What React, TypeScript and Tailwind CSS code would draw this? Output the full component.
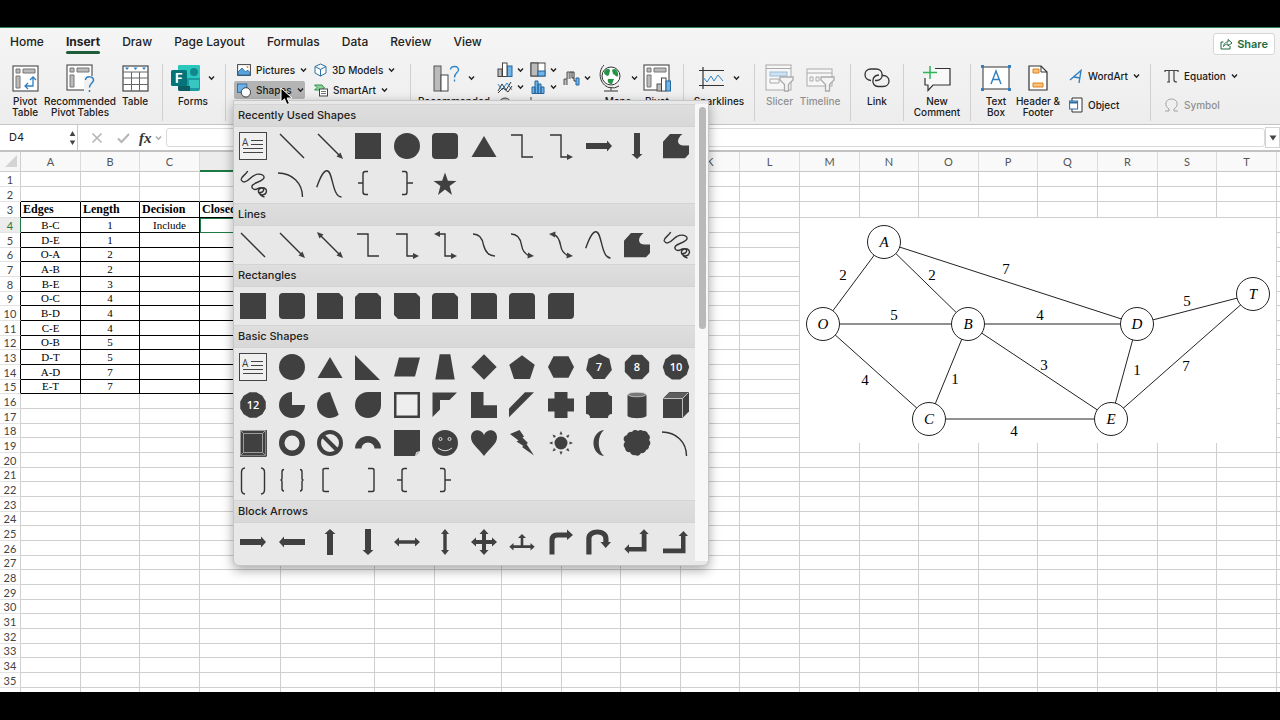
import React from "react";
import { clsx } from "clsx";

const INK = "#404040";

/* ---------- shape gallery ---------- */

const line = { fill: "none", stroke: "#333", strokeWidth: 1.4 };
const poly = (points: string) => <polygon points={points} />;
const numbered = (sides: number) => {
  const pts: string[] = [];
  const offset = sides === 7 ? 0 : Math.PI / sides;
  for (let i = 0; i < sides; i++) {
    const a = -Math.PI / 2 + offset + (i * 2 * Math.PI) / sides;
    pts.push(`${14 + 13.2 * Math.cos(a)},${14 + 13.2 * Math.sin(a)}`);
  }
  return (
    <>
      <polygon points={pts.join(" ")} />
      <text
        x="14"
        y="18"
        textAnchor="middle"
        fill="#fff"
        className="font-['Open_Sans',sans-serif] text-[11px] font-semibold"
      >
        {sides}
      </text>
    </>
  );
};

const rightArrow = "M1 11H22V8.500L27 14L22 19.500V17H1Z";
const freeform = "M1 9.700L8 2H20.500C15 6 14 13 21 13.500H27V22L23 26.300H1Z";
const scribble =
  "M8.700 1C7 5 1 7 2.300 10C4 13 7 12.500 11 8.500C15 4.500 20 3 23.500 5C28 8 22 11 18 12.500C14 14 12 16 13.300 18C15 21 18 19 20 18C24 17 27.500 18 27.500 21C27 26 22 25.500 20 23C18 20 22 17 24 18.500C26 20 23 23 21 22.500C20 24 22 26 25.500 27";
const sCurve = "M.7 17.300C4 8 7 .8 11 .8C17 .8 16 27 25.500 27";
const arc = "M0 3C14 3 24.500 13 24.500 27";
const leftBrace = "M14 1.500H11.500Q9 1.500 9 4V22Q9 24.500 11.500 24.500H14M9 13H4";
const rightBrace = "M9 1.500H12Q14 1.500 14 4V22Q14 24.500 12 24.500H9M14 13H20";

const shapes: Record<string, React.ReactNode> = {
  "Text Box": (
    <>
      <rect x=".5" y=".5" width="27" height="27" fill="#f0f0f0" stroke="#444" />
      <path d="M12 8.500H24M12 12.500H24M4 16.500H24M4 20.500H24" stroke="#444" />
      <text x="3" y="14" className="font-['Open_Sans',sans-serif] text-[10px]">
        A
      </text>
    </>
  ),
  Line: <path d="M2 2L26 26" {...line} />,
  Arrow: (
    <>
      <path d="M2 2L24 24" {...line} />
      {poly("27,27 20.5,24.5 24.5,20.5")}
    </>
  ),
  "Double Arrow": (
    <>
      <path d="M4 4L24 24" {...line} />
      {poly("27,27 20.5,24.5 24.5,20.5")}
      {poly("1,1 7.5,3.5 3.5,7.5")}
    </>
  ),
  Rectangle: <rect x="1" y="1" width="26" height="26" />,
  Oval: <circle cx="14" cy="14" r="13" />,
  "Rounded Rectangle": <rect x="1" y="1" width="26" height="26" rx="4" />,
  Triangle: poly("14,4 26.5,25 1.5,25"),
  Elbow: <path d="M3 3H14V25H25" {...line} />,
  "Elbow Arrow": (
    <>
      <path d="M3 3H14V25H21" {...line} />
      {poly("26,25 20,22 20,28")}
    </>
  ),
  "Elbow Double Arrow": (
    <>
      <path d="M8 3H14V25H21" {...line} />
      {poly("26,25 20,22 20,28")}
      {poly("3,3 9,0 9,6")}
    </>
  ),
  "Curved Connector": <path d="M3 3C10 3 12.500 8 13.500 14C15 20 18 25 25 25" {...line} />,
  "Curved Arrow": (
    <>
      <path d="M3 3C10 3 12.500 8 13.500 14C14.500 20 17 23 21 24.500" {...line} />
      {poly("26,25 20,21.5 19.500,27.5")}
    </>
  ),
  "Curved Double Arrow": (
    <>
      <path d="M7 3.500C11 5 12.500 9 13.500 14C14.500 20 17 23 21 24.500" {...line} />
      {poly("26,25 20,21.5 19.500,27.5")}
      {poly("2,3 8.500,.5 8,6.5")}
    </>
  ),
  "Right Arrow": <path d={rightArrow} />,
  "Left Arrow": <path d={rightArrow} transform="rotate(180 14 14)" />,
  "Down Arrow": <path d={rightArrow} transform="rotate(90 14 14)" />,
  "Up Arrow": <path d={rightArrow} transform="rotate(-90 14 14)" />,
  Freeform: <path d={freeform} />,
  Scribble: <path d={scribble} {...line} />,
  Arc: <path d={arc} {...line} />,
  Curve: <path d={sCurve} {...line} />,
  "Left Brace": <path d={leftBrace} {...line} />,
  "Right Brace": <path d={rightBrace} {...line} />,
  Star: poly("14,2.500 16.900,10.700 25.500,10.900 18.600,16.100 21,25 14,19.600 7,25 9.400,16.100 2.500,10.900 11.100,10.700"),
  "Snip Single": poly("1,1 23,1 27,5 27,27 1,27"),
  "Snip Same Side": poly("5,1 23,1 27,5 27,27 1,27 1,5"),
  "Snip Diagonal": poly("1,1 23,1 27,5 27,27 5,27 1,23"),
  "Snip and Round": <path d="M5 1H23L27 5V27H1V5Q1 1 5 1Z" />,
  "Round Single": <path d="M1 1H23Q27 1 27 5V27H1Z" />,
  "Round Same Side": <path d="M5 1H23Q27 1 27 5V27H1V5Q1 1 5 1Z" />,
  "Round Diagonal": <path d="M5 1H27V23Q27 27 23 27H1V5Q1 1 5 1Z" />,
  "Right Triangle": poly("1,2 26,27 1,27"),
  Parallelogram: poly("6,4.500 27,4.500 22,23.500 1,23.500"),
  Trapezoid: poly("8.700,1.300 19.300,1.300 23.700,26.500 4.300,26.500"),
  Diamond: poly("14,1.300 26.700,14 14,26.700 1.300,14"),
  Pentagon: poly("14,2.300 26.700,11.700 22,26 6,26 1.300,11.700"),
  Hexagon: poly("6.500,3.300 21.500,3.300 27,14 21.500,24.700 6.500,24.700 1,14"),
  Heptagon: numbered(7),
  Octagon: numbered(8),
  Decagon: numbered(10),
  Dodecagon: numbered(12),
  Pie: <path d="M14 1A13 13 0 1 0 27 14H14Z" />,
  Chord: <path d="M14 1L22.700 23.700A13 13 0 1 1 14 1Z" />,
  Teardrop: <path d="M14 1H27V14A13 13 0 1 1 14 1Z" />,
  Frame: <rect x="2.250" y="2.250" width="23.500" height="23.500" fill="#eee" stroke={INK} strokeWidth="2.500" />,
  "Half Frame": poly("1.500,1.500 26,1.500 18.500,9 9,9 9,18.500 1.500,26"),
  "L-Shape": poly("1,1 13.500,1 13.500,14.300 27,14.300 27,27 1,27"),
  "Diagonal Stripe": poly("1,17.500 17,1.300 26,1.300 1,26.300"),
  Cross: <path d="M7.500 1H20.500V7.500H27V20.500H20.500V27H7.500V20.500H1V7.500H7.500Z" />,
  Plaque: <path d="M5 1H23Q23 5 27 5V23Q23 23 23 27H5Q5 23 1 23V5Q5 5 5 1Z" />,
  Can: (
    <>
      <path d="M4.500 4V24.500C4.500 28 23.500 28 23.500 24.500V4Z" />
      <ellipse cx="14" cy="3.500" rx="9" ry="2.300" fill="#777" stroke="#ddd" strokeWidth=".7" />
    </>
  ),
  Cube: (
    <>
      <path d="M1 7.500L7.500 1H27V20.500L20.500 27H1Z" />
      <path d="M1.500 7.500L7.500 1.500H26.500L20.500 7.500Z" fill="#5e5e5e" />
      <path d="M1.500 7.500H20.500V26.500M20.500 7.500L26.500 1.500" fill="none" stroke="#ddd" strokeWidth=".8" />
    </>
  ),
  Bevel: (
    <>
      <rect x="1" y="1" width="26" height="26" />
      <path d="M1.500 1.500H26.500V26.500H1.500ZM4.500 4.500H23.500V23.500H4.500ZM1.500 1.500L4.500 4.500M26.500 1.500L23.500 4.500M26.500 26.500L23.500 23.500M1.500 26.500L4.500 23.500" fill="none" stroke="#c4c4c4" strokeWidth=".7" />
      <path d="M1 27.300H27.300V1" fill="none" stroke="#222" />
    </>
  ),
  Donut: <circle cx="14" cy="14" r="10.250" fill="none" stroke={INK} strokeWidth="5.500" />,
  "No Symbol": (
    <g fill="none" stroke={INK} strokeWidth="4">
      <circle cx="14" cy="14" r="11" />
      <path d="M6.500 6.500L21.500 21.500" />
    </g>
  ),
  "Block Arc": <path d="M1 19.500A13 12.500 0 0 1 27 19.500H20.500A6.500 6 0 0 0 7.500 19.500Z" />,
  "Folded Corner": (
    <>
      <path d="M1 1H27V22.500L22.500 27H1Z" />
      <path d="M22.500 27L23.500 23.500L27 22.500" fill="#bbb" stroke="#eee" strokeWidth=".8" />
    </>
  ),
  "Smiley Face": (
    <>
      <circle cx="14" cy="14" r="13" />
      <g fill="none" stroke="#ddd">
        <circle cx="9.500" cy="10" r="1.500" />
        <circle cx="18.500" cy="10" r="1.500" />
        <path d="M7 19Q14 24.500 21 19" />
      </g>
    </>
  ),
  Heart: <path d="M14 6C17-1 27 0 27 8.500C27 15 19 20 14 27C9 20 1 15 1 8.500C1 0 11-1 14 6Z" />,
  "Lightning Bolt": poly("2,5 11.500,1 16,7.500 14.500,8.500 20,14 18.500,15 26,26.500 14,18 15.500,17 8.500,12.500 10.500,11.500"),
  Sun: (
    <>
      <circle cx="14" cy="14" r="6.500" />
      {[0, 45, 90, 135, 180, 225, 270, 315].map((a) => (
        <polygon key={a} points="14,2 12.500,5.500 15.500,5.500" transform={`rotate(${a} 14 14)`} />
      ))}
    </>
  ),
  Moon: <path d="M19 1C5 3 5 25 19 27C12 21 12 7 19 1Z" />,
  Cloud: (
    <path d="M4 6A4 4 0 0 1 9 3A4 4 0 0 1 15 2A4 4 0 0 1 20 2A4 4 0 0 1 25 5A4 4 0 0 1 26 11A4 4 0 0 1 26 17A4 4 0 0 1 23 21A4 4 0 0 1 18 24A4 4 0 0 1 12 26A4 4 0 0 1 7 23A4 4 0 0 1 2 19A4 4 0 0 1 2 13A4 4 0 0 1 4 6Z" />
  ),
  "Double Bracket": <path d="M6 1Q2.500 1.500 2.500 5V23Q2.500 26.500 6 27M22 1Q25.500 1.500 25.500 5V23Q25.500 26.500 22 27" {...line} />,
  "Double Brace": (
    <path d="M6 2.500Q4 2.500 4 5V11Q4 13 2.500 13Q4 13 4 15V21.500Q4 24 6 24M22 2.500Q24 2.500 24 5V11Q24 13 25.500 13Q24 13 24 15V21.500Q24 24 22 24" {...line} />
  ),
  "Left Bracket": <path d="M13 1.500H9Q7 1.500 7 3V23Q7 24.500 9 24.500H13" {...line} />,
  "Right Bracket": <path d="M14 1.500H18Q20 1.500 20 3V23Q20 24.500 18 24.500H14" {...line} />,
  "Left-Right Arrow": <path d="M1 14L6 9.500V12.300H22V9.500L27 14L22 18.500V15.700H6V18.500Z" />,
  "Up-Down Arrow": <path d="M1 14L6 10V12.300H22V10L27 14L22 18V15.700H6V18Z" transform="rotate(90 14 14)" />,
  "Quad Arrow": (
    <path d="M14 1L18.500 6H16V12H22V9.500L27 14L22 18.500V16H16V22H18.500L14 27L9.500 22H12V16H6V18.500L1 14L6 9.500V12H12V6H9.500Z" />
  ),
  "Left-Right-Up Arrow": (
    <path d="M14 6L18 10H15.300V17.300H22.500V15L26.700 18.700L22.500 22.500V20H5.500V22.500L1.300 18.700L5.500 15V17.300H12.700V10H10Z" />
  ),
  "Bent Arrow": <path d="M2.500 26.500V12Q2.500 4.500 10 4.500H20V1.500L26 7L20 12V9.500H10.500Q7.500 9.500 7.500 12.500V26.500Z" />,
  "U-Turn Arrow": (
    <path d="M1.300 26.500V10.500C1.300-1.500 23.500-1.500 23.500 10.500V14H26L20.700 20L15.500 14H18.300V10.500C18.300 5 6.500 5 6.500 10.500V26.500Z" />
  ),
  "Left-Up Arrow": poly("1.300,21 6,16.300 6,19 18.700,19 18.700,6 16.300,6 21,1.300 25.700,6 23.500,6 23.500,23.500 6,23.500 6,25.700"),
  "Bent-Up Arrow": poly("1,20.500 19,20.500 19,8 16.500,8 21.500,3 26,8 23.500,8 23.500,25.300 1,25.300"),
};

const sections = [
  {
    title: "Recently Used Shapes",
    items: [
      "Text Box", "Line", "Arrow", "Rectangle", "Oval", "Rounded Rectangle", "Triangle", "Elbow",
      "Elbow Arrow", "Right Arrow", "Down Arrow", "Freeform", "Scribble", "Arc", "Curve",
      "Left Brace", "Right Brace", "Star",
    ],
  },
  {
    title: "Lines",
    items: [
      "Line", "Arrow", "Double Arrow", "Elbow", "Elbow Arrow", "Elbow Double Arrow",
      "Curved Connector", "Curved Arrow", "Curved Double Arrow", "Curve", "Freeform", "Scribble",
    ],
  },
  {
    title: "Rectangles",
    items: [
      "Rectangle", "Rounded Rectangle", "Snip Single", "Snip Same Side", "Snip Diagonal",
      "Snip and Round", "Round Single", "Round Same Side", "Round Diagonal",
    ],
  },
  {
    title: "Basic Shapes",
    items: [
      "Text Box", "Oval", "Triangle", "Right Triangle", "Parallelogram", "Trapezoid", "Diamond",
      "Pentagon", "Hexagon", "Heptagon", "Octagon", "Decagon", "Dodecagon", "Pie", "Chord",
      "Teardrop", "Frame", "Half Frame", "L-Shape", "Diagonal Stripe", "Cross", "Plaque", "Can",
      "Cube", "Bevel", "Donut", "No Symbol", "Block Arc", "Folded Corner", "Smiley Face", "Heart",
      "Lightning Bolt", "Sun", "Moon", "Cloud", "Arc", "Double Bracket", "Double Brace",
      "Left Bracket", "Right Bracket", "Left Brace", "Right Brace",
    ],
  },
  {
    title: "Block Arrows",
    items: [
      "Right Arrow", "Left Arrow", "Up Arrow", "Down Arrow", "Left-Right Arrow", "Up-Down Arrow",
      "Quad Arrow", "Left-Right-Up Arrow", "Bent Arrow", "U-Turn Arrow", "Left-Up Arrow",
      "Bent-Up Arrow",
    ],
  },
];

function ShapesMenu() {
  return (
    <div className="absolute -left-px top-full z-20 mt-px flex w-[476px] rounded-b-md border border-[#c6c6c6] bg-[#e8e8e8] pb-1 pt-[3px] shadow-[0_4px_12px_rgba(0,0,0,0.35)]">
      <div className="min-w-0 flex-1">
        {sections.map((section) => (
          <section key={section.title}>
            <h2 className="h-[23px] border-y border-[#d4d4d4] bg-linear-to-b from-[#dedede] to-[#d8d8d8] pl-1 text-[11px] font-medium leading-[21px] text-[#222]">
              {section.title}
            </h2>
            <div className="grid grid-cols-12">
              {section.items.map((name) => (
                <button key={name} aria-label={name} className="flex h-[38px] items-center justify-center">
                  <svg width="28" height="28" viewBox="0 0 28 28" fill={INK} overflow="visible">
                    {shapes[name]}
                  </svg>
                </button>
              ))}
            </div>
          </section>
        ))}
      </div>
      <div className="w-[13px] bg-[#f7f7f7] pl-1 pt-[3px]">
        <div className="h-[222px] w-[7px] rounded-full bg-[#b9b9b9]" />
      </div>
    </div>
  );
}

/* ---------- ribbon ---------- */

const tabs = ["Home", "Insert", "Draw", "Page Layout", "Formulas", "Data", "Review", "View"];

function Chevron({ className = "text-[#222]" }: { className?: string }) {
  return (
    <svg width="7" height="6" viewBox="0 0 7 6" className={clsx("shrink-0", className)}>
      <path d="M1 1.500L3.500 4.300L6 1.500" fill="none" stroke="currentColor" strokeWidth="1.400" />
    </svg>
  );
}

function Group({ className, children }: { className: string; children: React.ReactNode }) {
  return (
    <div className={clsx("relative flex shrink-0 after:absolute after:right-0 after:top-2 after:h-[57px] after:w-px after:bg-[#d0d0d0]", className)}>
      {children}
    </div>
  );
}

interface ToolProps {
  label: React.ReactNode;
  className: string;
  disabled?: boolean;
  chevron?: boolean;
  children: React.ReactNode;
}

function Tool({ label, className, disabled, chevron, children }: ToolProps) {
  return (
    <button
      disabled={disabled}
      className={clsx("flex shrink-0 flex-col items-center pt-2", disabled ? "text-[#909090]" : "text-[#1a1a1a]", className)}
    >
      <span className="flex h-7 items-center gap-2">
        {children}
        {chevron && <Chevron />}
      </span>
      <span className="mt-1 whitespace-nowrap text-[10px] font-medium leading-[11px]">{label}</span>
    </button>
  );
}

function SmallTool({ label, chevron, disabled, className, children }: { label: string; chevron?: boolean; disabled?: boolean; className?: string; children: React.ReactNode }) {
  return (
    <button
      disabled={disabled}
      className={clsx("flex items-center gap-[5px] whitespace-nowrap text-[10px] font-medium", disabled ? "text-[#909090]" : "text-[#1a1a1a]", className)}
    >
      {children}
      <span>{label}</span>
      {chevron && <Chevron />}
    </button>
  );
}

const pivotFrame = (
  <>
    <rect x="1" y="1" width="25" height="25" fill="#fff" stroke="#555" strokeWidth="1.200" />
    <path d="M4 4H8V8H4ZM11 4H23V8H11ZM4 11H8V23H4Z" fill="#bbb" stroke="#777" />
  </>
);

function PivotIcon() {
  return (
    <svg width="27" height="27" viewBox="0 0 27 27">
      {pivotFrame}
      <path d="M13 21H21V13M16 18L13 21L16 24M18 15L21 12L24 15" fill="none" stroke="#2f7fc1" strokeWidth="1.300" />
    </svg>
  );
}

function RecommendedPivotIcon() {
  return (
    <svg width="29" height="28" viewBox="0 0 29 28">
      {pivotFrame}
      <rect x="18" y="12" width="11" height="16" fill="#f1f1f1" />
      <path d="M19.500 16C20 11.500 28 12 27.500 16.500C27 19 23.500 19.500 23.500 23.500M23.500 26V28" fill="none" stroke="#2f7fc1" strokeWidth="1.500" />
    </svg>
  );
}

function TableIcon() {
  return (
    <svg width="27" height="27" viewBox="0 0 27 27">
      <rect x="1" y="1" width="25" height="25" fill="#fff" stroke="#444" strokeWidth="1.200" />
      <path d="M1 7H26M1 13H26M1 19.500H26M9.500 7V26M17.500 7V26" stroke="#666" />
      <path d="M3 2.500H7L5 5ZM11.500 2.500H15.500L13.500 5ZM20 2.500H24L22 5Z" fill="#2f7fc1" />
    </svg>
  );
}

function FormsIcon() {
  return (
    <svg width="29" height="26" viewBox="0 0 29 26">
      <rect x="7" width="22" height="26" rx="2" fill="#1a9ba1" />
      <path d="M7 2Q7 0 9 0H27Q29 0 29 2V13H7Z" fill="#2ac7bd" />
      <circle cx="23" cy="7" r="4" fill="#12888d" />
      <rect x="18" y="15" width="10" height="8" fill="#37c6c0" />
      <path d="M7 21H19V26H9Q7 26 7 24Z" fill="#0c5c63" />
      <rect y="5" width="16" height="16" rx="1.500" fill="#05737a" />
      <text x="4" y="18" fill="#fff" className="text-[13px] font-bold">F</text>
    </svg>
  );
}

function BarsIcon() {
  return (
    <svg width="16" height="15" viewBox="0 0 16 15">
      <rect x="1" y="7" width="4" height="7.500" fill="#bbb" stroke="#444" />
      <rect x="5.500" y="1" width="4.500" height="13.500" fill="#fff" stroke="#444" />
      <rect x="10.500" y="4" width="4.500" height="10.500" fill="#6fb5ea" stroke="#24659c" />
    </svg>
  );
}

function FilterTable({ narrow }: { narrow?: boolean }) {
  return (
    <svg width="29" height="28" viewBox="0 0 29 28" fill="none" stroke="#aaa">
      {narrow ? (
        <>
          <rect x="1" y="5" width="25" height="17" fill="#f7f7f7" />
          <path d="M1 9H26M4 13H7V17H4ZM10 13H13V17H10Z" />
        </>
      ) : (
        <>
          <rect x="1" y="1" width="25" height="25" fill="#f7f7f7" />
          <path d="M1 4.500H26" />
          <rect x="5" y="8" width="17" height="4" fill="#cfe2f2" stroke="#9bbdd8" />
          <path d="M5 15H14V19H5Z" />
        </>
      )}
      <path d="M15 13H28V16L23.500 20.500V27H19.500V20.500L15 16Z" fill="#f4f4f4" strokeWidth="1.300" />
    </svg>
  );
}

function Ribbon() {
  return (
    <header className="relative z-10 border-b border-t border-b-[#c4c4c4] border-t-[#2b8150] bg-linear-to-b from-[#f5f5f5] to-[#ededed]">
      <div className="flex h-7 items-center justify-between">
        <nav className="flex h-full items-center gap-[22px] pl-[10px]">
          {tabs.map((tab) => (
            <button
              key={tab}
              className={clsx(
                "relative h-full whitespace-nowrap text-[12px] text-[#222]",
                tab === "Insert"
                  ? "font-bold after:absolute after:inset-x-0 after:bottom-[2px] after:h-[3px] after:rounded-full after:bg-[#1e5c3a]"
                  : "font-medium",
              )}
            >
              {tab}
            </button>
          ))}
        </nav>
        <button className="mr-[5px] mt-1 flex h-[22px] items-center gap-1 rounded-[3px] border border-[#d6d6d6] bg-white px-[6px] text-[11px] font-semibold text-[#1e6a40]">
          <svg width="13" height="12" viewBox="0 0 13 12" fill="none" stroke="currentColor">
            <path d="M3.500 4H1V11H10V8M3.500 8.500C4 5 6 4 8 4V1.500L12 5L8 8V6C6 6 5 7 3.500 8.500Z" />
          </svg>
          Share
        </button>
      </div>

      <div className="flex h-[68px]">
        <Group className="w-[163px]">
          <Tool label={<>Pivot<br />Table</>} className="w-[50px]"><PivotIcon /></Tool>
          <Tool label={<>Recommended<br />Pivot Tables</>} className="w-[60px]"><RecommendedPivotIcon /></Tool>
          <Tool label="Table" className="w-[50px]"><TableIcon /></Tool>
        </Group>

        <Group className="w-[63px] pl-[2px]">
          <Tool label="Forms" chevron className="w-[56px]"><FormsIcon /></Tool>
        </Group>

        <Group className="w-[185px] pl-2 pt-1">
          <div className="flex w-[80px] flex-col">
            <SmallTool label="Pictures" chevron className="h-5 pl-[3px]">
              <svg width="14" height="12" viewBox="0 0 14 12" className="shrink-0">
                <rect x=".6" y=".6" width="12.800" height="10.800" fill="#fff" stroke="#444" />
                <path d="M1 8L5 4L8.500 8L10.500 6L13 8.500V11H1Z" fill="#5ba3dc" stroke="#1f6299" strokeWidth=".8" />
                <circle cx="10.500" cy="3" r="1" fill="#e8912d" />
              </svg>
            </SmallTool>
            <div className="relative h-[19px] pt-px">
              <SmallTool label="Shapes" chevron className="h-[18px] w-[71px] rounded-[2px] bg-[#b4b4b4] pl-[3px]">
                <svg width="14" height="15" viewBox="0 0 15 15" className="shrink-0">
                  <rect x=".5" y=".5" width="10" height="9" fill="#6fb1e8" stroke="#2a6ca6" />
                  <circle cx="9.500" cy="9.500" r="5" fill="#fff" stroke="#333" />
                </svg>
              </SmallTool>
              <ShapesMenu />
              <svg width="13" height="19" viewBox="0 0 13 19" className="absolute left-[46px] top-[7px] z-30">
                <path d="M1 1V15L4.500 11.800L6.800 17.500L9.500 16.400L7.100 11H12Z" fill="#000" stroke="#fff" />
              </svg>
            </div>
          </div>
          <div className="flex flex-col">
            <SmallTool label="3D Models" chevron className="h-5">
              <svg width="13" height="14" viewBox="0 0 13 14" fill="#fff" stroke="#2a6f9f" className="shrink-0">
                <path d="M6.500 1L12 3.500V10L6.500 13L1 10V3.500ZM1 3.500L6.500 6.500L12 3.500M6.500 6.500V13" />
              </svg>
            </SmallTool>
            <SmallTool label="SmartArt" chevron className="h-5">
              <svg width="14" height="13" viewBox="0 0 14 13" className="shrink-0">
                <path d="M.5 1H8L10.500 4L8 6H.5L3 3.500Z" fill="#8fd19e" stroke="#2c9648" />
                <rect x="5.500" y="5" width="8" height="7" fill="#fff" stroke="#444" />
                <path d="M7 7.500H12M7 9.500H12" stroke="#777" />
              </svg>
            </SmallTool>
          </div>
        </Group>

        <Group className="w-[273px]">
          <Tool label={<>Recommended<br />Charts</>} chevron className="w-[86px]">
            <svg width="27" height="27" viewBox="0 0 27 27">
              <rect x="1" y="1" width="7" height="25" fill="#bbb" stroke="#555" />
              <rect x="8" y="10" width="7" height="16" fill="#fff" stroke="#444" />
              <path d="M17.500 4.500C18 .5 26 .5 25.500 5C25 8 21.500 8 21.500 12.500M21.500 14.500V16.500" fill="none" stroke="#2f86c9" strokeWidth="1.400" />
            </svg>
          </Tool>
          <div className="grid h-[60px] grid-cols-[33px_33px] content-start gap-y-[3px] pt-[6px]">
            <button aria-label="Column chart" className="flex items-center gap-1"><BarsIcon /><Chevron /></button>
            <button aria-label="Hierarchy chart" className="flex items-center gap-1">
              <svg width="16" height="15" viewBox="0 0 16 15">
                <rect x="1" y="1" width="14" height="13" fill="#fff" stroke="#444" />
                <rect x="1" y="1" width="7" height="13" fill="#bbb" stroke="#444" />
                <rect x="8" y="9" width="7" height="5" fill="#6fb5ea" stroke="#24659c" />
              </svg>
              <Chevron />
            </button>
            <button aria-label="Line chart" className="flex items-center gap-1">
              <svg width="16" height="14" viewBox="0 0 16 14" fill="none">
                <path d="M1 11L5 4L9 10L14 2" stroke="#333" />
                <path d="M1 4L5 10L10 3L15 10" stroke="#2f86c9" />
                <path d="M1 13L6 8L11 12L15 6" stroke="#333" />
              </svg>
              <Chevron />
            </button>
            <button aria-label="Statistical chart" className="flex items-center gap-1">
              <svg width="16" height="14" viewBox="0 0 16 14" fill="#6fb5ea" stroke="#24659c">
                <path d="M2 13.500V7H5V13.500ZM5 13.500V1H8V13.500ZM8 13.500V4H11V13.500ZM11 13.500V7H14V13.500Z" />
              </svg>
              <Chevron />
            </button>
            <button aria-label="Pie chart" className="flex items-center">
              <svg width="16" height="14" viewBox="0 0 16 14"><circle cx="8" cy="7" r="6" fill="#bbb" stroke="#444" /></svg>
            </button>
            <button aria-label="Scatter chart" className="flex items-center">
              <svg width="16" height="14" viewBox="0 0 16 14"><path d="M1 0V13H15" fill="none" stroke="#444" /></svg>
            </button>
          </div>
          <button aria-label="Waterfall chart" className="flex h-[44px] w-[32px] items-center gap-1 self-start">
            <svg width="17" height="15" viewBox="0 0 17 15" className="shrink-0">
              <path d="M1 14V8H4V14M4 8V1H7V8" fill="#bbb" stroke="#555" />
              <path d="M9 1V7H11M7 1H11V10H13" fill="none" stroke="#333" />
              <path d="M13 7H16V14H13Z" fill="#6fb5ea" stroke="#24659c" />
            </svg>
            <Chevron />
          </button>
          <Tool label="Maps" chevron className="w-[46px]">
            <svg width="24" height="28" viewBox="0 0 24 28" fill="none">
              <circle cx="12" cy="12" r="9" fill="#fff" stroke="#333" />
              <path d="M5 8C7 4 11 4 11 7C10 9 11 10 9 12C7 11 5 11 5 8ZM13 6C16 3 20 7 19 12C17 14 16 10 14 10ZM9 15H15L13 20C10 20 8 18 9 15Z" fill="#259447" />
              <path d="M5 1C-2 8 1 21 10 23.500Q16 25 20 22M12 24V26.500M5 27H19" stroke="#333" />
            </svg>
          </Tool>
          <Tool label={<>Pivot<br />Chart</>} className="w-[32px]">
            <svg width="29" height="28" viewBox="0 0 29 28" className="shrink-0">
              {pivotFrame}
              <path d="M14 28V20H18.500V14H23V17H28V28Z" fill="#f1f1f1" />
              <rect x="14" y="20" width="4.500" height="7" fill="#bbb" stroke="#555" />
              <rect x="18.500" y="14" width="4.500" height="13" fill="#fff" stroke="#444" />
              <rect x="23" y="17" width="4.500" height="10" fill="#6fb5ea" stroke="#24659c" />
            </svg>
          </Tool>
        </Group>

        <Group className="w-[71px]">
          <Tool label="Sparklines" chevron className="w-[70px]">
            <svg width="27" height="24" viewBox="0 0 27 24" fill="none">
              <path d="M1 4.500H26M1 19.500H26M5 1V23" stroke="#333" strokeWidth="1.200" />
              <path d="M5 11L9 16L13 10L16 15L20 9L25 15" stroke="#2f86c9" />
            </svg>
          </Tool>
        </Group>

        <Group className="w-[96px] pl-[2px]">
          <Tool label="Slicer" disabled className="w-[45px]"><FilterTable /></Tool>
          <Tool label="Timeline" disabled className="w-[36px]"><FilterTable narrow /></Tool>
        </Group>

        <Group className="w-[53px]">
          <Tool label="Link" className="w-[52px]">
            <svg width="26" height="20" viewBox="0 0 26 20" fill="none" stroke="#333" strokeWidth="1.300">
              <path d="M7 12.500C-1 12-1 1 7 1H12C20 1 20 12 13 12.500H11" />
              <path d="M15 7C7 7.500 7 18.500 14 18.500H19C27 18.500 27 7.500 19 7.500H18" />
            </svg>
          </Tool>
        </Group>

        <Group className="w-[67px]">
          <Tool label={<>New<br />Comment</>} className="w-[66px]">
            <svg width="28" height="27" viewBox="0 0 28 27" fill="none">
              <path d="M12 3.500H27V20H10L5 25.500V20H2V13" fill="#f8f8f8" stroke="#333" strokeWidth="1.200" />
              <path d="M7 1V14M0 7.500H14" stroke="#2fb457" strokeWidth="1.500" />
            </svg>
          </Tool>
        </Group>

        <Group className="w-[180px] pl-1">
          <Tool label={<>Text<br />Box</>} className="w-[42px]">
            <svg width="30" height="26" viewBox="0 0 30 26">
              <rect x="2" y="2" width="26" height="22" fill="#fff" stroke="#333" />
              <path d="M0 0H3V3H0ZM27 0H30V3H27ZM0 23H3V26H0ZM27 23H30V26H27Z" fill="#2f7fc1" />
              <path d="M10 19L15 6L20 19M11.800 14.500H18.200" fill="none" stroke="#2f7fc1" strokeWidth="1.400" />
            </svg>
          </Tool>
          <Tool label={<>Header &amp;<br />Footer</>} className="w-[42px]">
            <svg width="20" height="26" viewBox="0 0 20 26">
              <path d="M1 1H13L19 7V25H1Z" fill="#fff" stroke="#333" strokeWidth="1.200" />
              <path d="M13 1V7H19" fill="none" stroke="#333" />
              <path d="M5 4H11V8H5ZM5 18H15V22H5Z" fill="#fcc277" stroke="#d98224" />
            </svg>
          </Tool>
          <div className="flex flex-col pl-[10px] pt-[10px]">
            <SmallTool label="WordArt" chevron className="h-5">
              <svg width="14" height="15" viewBox="0 0 14 15" fill="none" stroke="#2f7fc1" strokeWidth="1.400" className="shrink-0">
                <path d="M1 11L12 1.500L10 14M5 8L11 9" />
              </svg>
            </SmallTool>
            <SmallTool label="Object" className="mt-[9px] h-5">
              <svg width="14" height="16" viewBox="0 0 14 16" className="shrink-0">
                <path d="M3 4V1H13V15H3V12" fill="#fff" stroke="#333" />
                <rect x=".6" y="4" width="8" height="8" fill="#fff" stroke="#2a6ca6" />
                <path d="M.6 5.500H8.600" stroke="#2a6ca6" strokeWidth="2" />
              </svg>
            </SmallTool>
          </div>
        </Group>

        <div className="flex shrink-0 flex-col pl-[13px] pt-[10px]">
          <SmallTool label="Equation" chevron className="h-5">
            <svg width="15" height="14" viewBox="0 0 15 14" fill="none" stroke="#444" strokeWidth="1.200">
              <path d="M1 3V1.500H14V3M5 1.500V12.500M3 13H6M10 1.500V11Q10 13 13 13" />
            </svg>
          </SmallTool>
          <SmallTool label="Symbol" disabled className="mt-[9px] h-5">
            <svg width="15" height="14" viewBox="0 0 15 14" fill="none" stroke="#a2a2a2">
              <path d="M1 13H5V11C0 8 1 1 7.500 1C14 1 15 8 10 11V13H14" />
            </svg>
          </SmallTool>
        </div>
      </div>
    </header>
  );
}

function FormulaBar() {
  return (
    <div className="flex h-[27px] border-b-2 border-[#c2c2c2] bg-white">
      <label className="flex w-[78px] shrink-0 items-center border-r border-[#c8c8c8] pl-[9px] pr-px">
        <input aria-label="Name box" defaultValue="D4" className="w-full min-w-0 text-[11px] text-[#222] outline-none" />
        <svg width="7" height="16" viewBox="0 0 7 16" fill="#444" className="shrink-0">
          <path d="M3.500 1L6.300 6H.7ZM3.500 15L.7 10.500H6.300Z" />
        </svg>
      </label>
      <div className="flex w-[88px] shrink-0 items-center pl-[13px]">
        <svg width="12" height="12" viewBox="0 0 12 12" fill="none" stroke="#b5b5b5" strokeWidth="1.600">
          <path d="M1.500 1.500L10.500 10.500M10.500 1.500L1.500 10.500" />
        </svg>
        <svg width="13" height="12" viewBox="0 0 13 12" fill="none" stroke="#b5b5b5" strokeWidth="2" className="ml-[14px]">
          <path d="M1 6.500L4.500 10L12 2" />
        </svg>
        <span className="ml-[9px] font-['Liberation_Serif',serif] text-[15px] font-bold italic leading-5 text-[#333]">fx</span>
        <Chevron className="ml-[3px] text-[#aaa]" />
      </div>
      <input aria-label="Formula" className="my-[3px] min-w-0 flex-1 rounded-[3px] border border-[#dadada] px-1 text-[11px] outline-none" />
      <button aria-label="Expand formula bar" className="my-[2px] flex w-[15px] items-center justify-center border border-[#d4d4d4]">
        <svg width="8" height="6" viewBox="0 0 8 6" fill="#444"><path d="M.5.5H7.500L4 5.500Z" /></svg>
      </button>
    </div>
  );
}

/* ---------- sheet ---------- */

const columns = [
  { name: "A", width: 60 },
  { name: "B", width: 59 },
  { name: "C", width: 60 },
  { name: "D", width: 81 },
  { name: "E", width: 94 },
  { name: "F", width: 60 },
  { name: "G", width: 67 },
  { name: "H", width: 60 },
  { name: "I", width: 59 },
  { name: "J", width: 60 },
  { name: "K", width: 59 },
  { name: "L", width: 60 },
  { name: "M", width: 60 },
  { name: "N", width: 59 },
  { name: "O", width: 60 },
  { name: "P", width: 59 },
  { name: "Q", width: 60 },
  { name: "R", width: 60 },
  { name: "S", width: 59 },
  { name: "T", width: 60 },
];

const cells: Record<number, string[]> = {
  3: ["Edges", "Length", "Decision", "Closed"],
  4: ["B-C", "1", "Include"],
  5: ["D-E", "1"],
  6: ["O-A", "2"],
  7: ["A-B", "2"],
  8: ["B-E", "3"],
  9: ["O-C", "4"],
  10: ["B-D", "4"],
  11: ["C-E", "4"],
  12: ["O-B", "5"],
  13: ["D-T", "5"],
  14: ["A-D", "7"],
  15: ["E-T", "7"],
};

const rows = Array.from({ length: 35 }, (_, i) => i + 1);

function rowHeight(row: number) {
  if (row === 3) return "h-4";
  return row % 3 === 0 ? "h-[14px]" : "h-[15px]";
}

function cellBorder(row: number, col: number) {
  if (row === 4 && col === 3) return "border-[#1e7a45] shadow-[inset_1px_1px_0_#1e7a45]";
  if (row >= 3 && row <= 15 && col < 4) return "border-black";
  if (row === 2 && col < 4) return "border-b-black border-r-[#cfcfcf]";
  return "border-[#cfcfcf]";
}

function Sheet() {
  return (
    <table className="w-full table-fixed border-separate border-spacing-0">
      <colgroup>
        <col style={{ width: 21 }} />
        {columns.map((c) => (
          <col key={c.name} style={{ width: c.width }} />
        ))}
        <col />
      </colgroup>
      <thead>
        <tr className="h-5 font-['Lato',sans-serif] text-[11px] leading-[14px] text-[#555]">
          <th className="border-b border-r border-[#cfcfcf] bg-[#f6f6f6] p-0" aria-label="Select all">
            <svg width="14" height="13" viewBox="0 0 14 13" className="ml-1"><path d="M13 0V12H1Z" fill="#d4d4d4" /></svg>
          </th>
          {columns.map((c) => (
            <th
              key={c.name}
              className={clsx("border-b border-r border-r-[#dcdcdc] p-0 font-normal", c.name === "D" ? "border-b-[#1e7a45] bg-[#ececec] shadow-[inset_0_-1px_0_#1e7a45]" : "border-b-[#c8c8c8] bg-[#f9f9f9]")}
            >
              {c.name}
            </th>
          ))}
          <th className="border-b border-[#c8c8c8] bg-[#f9f9f9] p-0" />
        </tr>
      </thead>
      <tbody>
        {rows.map((row) => (
          <tr key={row} className={rowHeight(row)}>
            <th
              className={clsx(
                "border-b border-r border-b-[#e2e2e2] p-0 font-['Lato',sans-serif] text-[11px] font-normal leading-[13px]",
                row === 4 ? "border-r-[#1e7a45] bg-[#ececec] text-[#1e7a45]" : "text-[#444]",
                row !== 4 && (row >= 3 && row <= 15 ? "border-r-black" : "border-r-[#cfcfcf]"),
              )}
            >
              {row}
            </th>
            {columns.map((c, i) => (
              <td
                key={c.name}
                className={clsx(
                  "overflow-hidden whitespace-nowrap border-b border-r p-0 font-['Liberation_Serif',serif] leading-[13px] text-black",
                  row === 3 ? "pl-[2px] text-left text-[12px] font-bold" : "text-center text-[11px]",
                  cellBorder(row, i),
                )}
              >
                {cells[row]?.[i]}
              </td>
            ))}
            <td className="border-b border-[#cfcfcf] p-0" />
          </tr>
        ))}
        <tr className="h-[15px]">
          <th className="border-r border-[#cfcfcf] p-0" />
          {columns.map((c) => (
            <td key={c.name} className="border-r border-[#cfcfcf] p-0" />
          ))}
          <td className="p-0" />
        </tr>
      </tbody>
    </table>
  );
}

const nodes: Record<string, [number, number]> = {
  A: [84, 24],
  O: [23, 106],
  B: [168, 106],
  C: [129, 201],
  D: [337, 106],
  E: [311, 201],
  T: [453, 76],
};

const edges: { from: string; to: string; weight: number; at: [number, number] }[] = [
  { from: "O", to: "A", weight: 2, at: [43, 57] },
  { from: "A", to: "B", weight: 2, at: [132, 57] },
  { from: "A", to: "D", weight: 7, at: [206, 51] },
  { from: "O", to: "B", weight: 5, at: [94, 97] },
  { from: "B", to: "D", weight: 4, at: [240, 97] },
  { from: "D", to: "T", weight: 5, at: [387, 83] },
  { from: "B", to: "E", weight: 3, at: [244, 147] },
  { from: "B", to: "C", weight: 1, at: [155, 161] },
  { from: "D", to: "E", weight: 1, at: [337, 152] },
  { from: "E", to: "T", weight: 7, at: [386, 148] },
  { from: "O", to: "C", weight: 4, at: [65, 162] },
  { from: "C", to: "E", weight: 4, at: [214, 213] },
];

function Network() {
  return (
    <svg width="476" height="225" viewBox="0 0 476 225" className="absolute left-[800px] top-[66px] bg-white font-['Liberation_Serif',serif] text-[15px]">
      {edges.map((e) => (
        <g key={e.from + e.to}>
          <line x1={nodes[e.from][0]} y1={nodes[e.from][1]} x2={nodes[e.to][0]} y2={nodes[e.to][1]} stroke="#222" />
          <text x={e.at[0]} y={e.at[1] + 5} textAnchor="middle">{e.weight}</text>
        </g>
      ))}
      {Object.entries(nodes).map(([name, [x, y]]) => (
        <g key={name}>
          <circle cx={x} cy={y} r="16.500" fill="#fff" stroke="#222" />
          <text x={x} y={y + 5} textAnchor="middle" fontStyle="italic">{name}</text>
        </g>
      ))}
    </svg>
  );
}

export default function App() {
  return (
    <div className="flex h-screen flex-col overflow-hidden bg-black pb-7 pt-[27px] font-['Inter',sans-serif]">
      <Ribbon />
      <FormulaBar />
      <main className="relative min-h-0 flex-1 overflow-hidden bg-white">
        <Sheet />
        <Network />
      </main>
    </div>
  );
}
